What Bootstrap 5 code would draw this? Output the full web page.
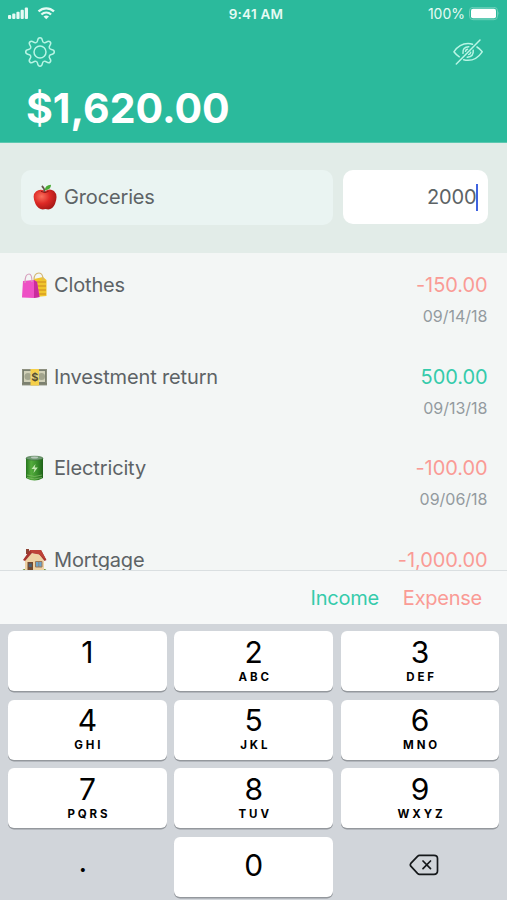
<!DOCTYPE html>
<html lang="en">
<head>
<meta charset="utf-8">
<meta name="viewport" content="width=device-width, initial-scale=1">
<title>Budget</title>
<link href="https://cdn.jsdelivr.net/npm/bootstrap@5.3.0/dist/css/bootstrap.min.css" rel="stylesheet">
<style>
body{font-family:Inter,"Liberation Sans",sans-serif;background:#f3f6f5;color:#5d6366;height:900px;overflow:hidden;font-size:20px;line-height:24px;letter-spacing:-.15px}
svg{display:block;flex:none}
.topbar{height:143px;background:#2bba9c;color:#fff;border-bottom:1px solid #5cc8b0}
.status{height:28px;padding:0 7px 0 8px;font-size:14px;line-height:28px;letter-spacing:0;color:#e6faf4}
.clock{font-size:13.5px;font-weight:600;letter-spacing:.25px;padding-left:5px}
.tools{height:48px;padding:0 24px}
.total{font-size:41px;line-height:50px;font-weight:700;letter-spacing:0;padding:7px 0 0 26px}
.entry{height:110px;background:#e2ece8;padding:27px 19px 28px 20.500px;gap:10px}
.category{flex:1;background:#eaf4f2;border-radius:10px;padding:0 11px;gap:6.500px}
.category span{margin-top:-2px}
.amount-box{width:145px;height:54px;background:#fff;border-radius:10px;padding-right:10px;color:#5d6366}
.caret{width:2.5px;height:27px;background:#3f63e0;margin-left:-1px}
.entries{height:317px;overflow:hidden;padding:20px 19.500px 0 21px}
.entry-row{height:91.6px}
.entry-row .name{gap:6px;height:25px}
.entry-row .name span{margin-top:-1px}
.value{line-height:25px;letter-spacing:-.08px}
.date{font-size:16px;line-height:22px;color:#939b9f;margin-top:7px;letter-spacing:0}
.neg{color:#fa9b95}.pos{color:#35cbab}
.actions{height:54px;background:#f6f8f8;border-top:1.5px solid #dadfe1;padding-right:25px;gap:24px;letter-spacing:-.25px}
.keypad{height:276px;background:#d1d5da;padding:7px 7.500px 0 8px}
.keys{display:grid;grid-template-columns:repeat(3,1fr);grid-auto-rows:60px;gap:8.5px 7.5px}
.key{border:0;padding:0 0 4px;background:#fff;border-radius:6px;box-shadow:0 1.5px 0 #94989d;color:#000;font-size:30px;line-height:34px;letter-spacing:0}
.key small{display:block;font-size:11.500px;line-height:14px;font-weight:700;letter-spacing:2.9px;padding-left:3px;height:14px;margin-top:1px}
.key.flat{background:none;box-shadow:none}
.key.point{padding:0 9px 11px 0}
.key.zero{padding:0 0 3px}
.key.erase{padding:0 0 3px 8px}
</style>
</head>
<body>
<header class="topbar">
  <div class="status d-flex align-items-center justify-content-between position-relative">
    <svg width="50" height="14" viewBox="0 0 50 14" fill="#e6faf4"><rect y="8" width="3.2" height="4" rx="1"/><rect x="4.2" y="6.5" width="3.2" height="5.5" rx="1"/><rect x="8.4" y="4.7" width="3.2" height="7.3" rx="1"/><rect x="12.6" y="2.8" width="3.2" height="9.2" rx="1"/><rect x="16.8" y=".5" width="3.2" height="11.5" rx="1"/>
      <g fill="none" stroke="#e6faf4" stroke-width="2.3"><path d="M30.5 4.4C35 .3 41.500.3 46 4.400"/><path d="M33.400 7.500C36.200 5 40.300 5 43.100 7.500"/></g><path d="M35.500 9.500Q38.250 7.500 41 9.500L38.250 12.300Z"/></svg>
    <div class="clock position-absolute top-0 start-50 translate-middle-x text-nowrap">9:41 AM</div>
    <div class="d-flex align-items-center gap-1"><span>100%</span>
      <svg width="31" height="15" viewBox="0 0 31 15"><rect x=".5" y=".3" width="28" height="12.400" rx="3.500" fill="none" stroke="#6dd0ba" stroke-width="1"/><rect x="2" y="1.800" width="25" height="9.400" rx="2" fill="#fff"/><path d="M29.600 4.300Q31 6.500 29.600 8.700Z" fill="#8edccb"/></svg>
    </div>
  </div>
  <div class="tools d-flex align-items-center justify-content-between">
    <svg width="32" height="32" viewBox="-16 -16 32 32" fill="none" stroke="#b9f5e5" stroke-width="1.500"><defs><path id="tooth" d="M-3.900-9.400Q-2.600-9.900-2.400-11.500C-2.100-13.600-1.300-14.300 0-14.300C1.300-14.300 2.100-13.600 2.400-11.500Q2.600-9.900 3.900-9.400"/></defs><use href="#tooth"/><use href="#tooth" transform="rotate(45)"/><use href="#tooth" transform="rotate(90)"/><use href="#tooth" transform="rotate(135)"/><use href="#tooth" transform="rotate(180)"/><use href="#tooth" transform="rotate(225)"/><use href="#tooth" transform="rotate(270)"/><use href="#tooth" transform="rotate(315)"/><circle r="6"/></svg>
    <svg width="30" height="28" viewBox="0 0 30 28" fill="none" stroke="#b9f5e5" stroke-width="1.500" stroke-linecap="round" stroke-linejoin="round"><path d="M3.300 26L27 2"/><path d="M6.300 18.800Q3 16.700.900 13.800Q6.500 5.500 15 5.500Q17.600 5.500 19.500 6.200"/><path d="M24 9Q27 10.900 29.200 13.800Q23.500 22.300 15 22.300Q12.600 22.300 10.700 21.700"/><path d="M10 15.300Q9.300 9 15.800 8.700M12.500 13.300Q12.800 11.600 14.500 11.300M20.200 12.300Q20.900 18.500 14.300 19.300M17.700 14.300Q17.500 16 15.700 16.600"/></svg>
  </div>
  <div class="total">$1,620.00</div>
</header>
<main>
  <section class="entry d-flex">
    <div class="category d-flex align-items-center">
      <svg width="26" height="27" viewBox="0 0 26 27"><defs><radialGradient id="red" cx=".35" cy=".35" r=".8"><stop offset="0" stop-color="#fa705d"/><stop offset=".45" stop-color="#dd2925"/><stop offset="1" stop-color="#961312"/></radialGradient></defs><path d="M13 7Q18 4 22 7Q26.500 11 23 20Q20 27 13.500 25Q7 27 3.500 20Q-.5 11 4 7.500Q8 4.500 13 7Z" fill="url(#red)"/><path d="M9 7.300Q13 10 16.500 7.300" stroke="#8c1615" fill="none"/><path d="M12.600 8Q12.500 4 9.800 2" stroke="#65544a" stroke-width="1.600" fill="none"/><path d="M12.800 6.300Q13 1 19 .8Q19 6 12.800 6.300Z" fill="#4aaa35"/></svg>
      <span>Groceries</span>
    </div>
    <div class="amount-box d-flex align-items-center justify-content-end"><span>2000</span><span class="caret"></span></div>
  </section>
  <section class="entries">
    <div class="entry-row d-flex justify-content-between">
      <div class="name d-flex align-items-center">
        <svg width="27" height="27" viewBox="0 0 27 27"><path d="M13 7L22 5L25.500 8V24L14 25Z" fill="#f0c52c"/><path d="M14 10H25M14 14H25M14 18H25M14 22H25" stroke="#d89d22" stroke-width="1.500"/><path d="M13 8Q13 1 18 1Q22 1 22 8" fill="none" stroke="#d4b774" stroke-width="1.200"/><path d="M2 9L13 8L16 10L18.500 25L13 26L1 25.500Z" fill="#ee50c5"/><path d="M13 8L16 10L18.500 25L13 26Z" fill="#c92c9d"/><path d="M4 11Q4 2 8 2Q11 2 11 10" fill="none" stroke="#d7a0bd" stroke-width="1.200"/></svg><span>Clothes</span>
      </div>
      <div class="text-end"><div class="value neg">-150.00</div><div class="date">09/14/18</div></div>
    </div>
    <div class="entry-row d-flex justify-content-between">
      <div class="name d-flex align-items-center">
        <svg width="27" height="27" viewBox="0 0 27 27"><rect x="1" y="5" width="25" height="16" fill="#8e9180"/><rect x="2.500" y="6.500" width="22" height="12" fill="#d0d0b8" stroke="#6f7567" stroke-width=".8"/><circle cx="7" cy="12.500" r="3.500" fill="#a2a58e"/><circle cx="20.500" cy="12.500" r="3.500" fill="#a2a58e"/><path d="M1 19.500H26M1 21H26" stroke="#747866" stroke-width=".7"/><path d="M9.500 5H18V21.500H9.500Z" fill="#f5cf49"/><circle cx="13.700" cy="12.500" r="4" fill="#e9d783"/><text x="13.700" y="16.500" font-size="11" font-weight="700" text-anchor="middle" fill="#574d2d">$</text></svg><span>Investment return</span>
      </div>
      <div class="text-end"><div class="value pos">500.00</div><div class="date">09/13/18</div></div>
    </div>
    <div class="entry-row d-flex justify-content-between">
      <div class="name d-flex align-items-center">
        <svg width="27" height="27" viewBox="0 0 27 27"><defs><linearGradient id="cell"><stop stop-color="#26751e"/><stop offset=".3" stop-color="#55ad3d"/><stop offset=".65" stop-color="#398f2b"/><stop offset="1" stop-color="#1e6118"/></linearGradient></defs><path d="M5 3V23Q13.500 28 22 23V3Z" fill="url(#cell)"/><ellipse cx="13.500" cy="3.200" rx="8.500" ry="2" fill="#739c77" stroke="#376b35" stroke-width=".6"/><ellipse cx="13.500" cy="2.600" rx="3.500" ry="1" fill="#b7c8ba"/><path d="M14.500 9L10.500 14H13.500L12.500 18L16.800 12.500H13.700Z" fill="#c6e8b4"/><path d="M6 20Q13.500 23 21 20M6 22.500Q13.500 25.500 21 22.500" fill="none" stroke="#87bc6b" stroke-width=".7"/></svg><span>Electricity</span>
      </div>
      <div class="text-end"><div class="value neg">-100.00</div><div class="date">09/06/18</div></div>
    </div>
    <div class="entry-row d-flex justify-content-between">
      <div class="name d-flex align-items-center">
        <svg width="27" height="27" viewBox="0 0 27 27"><path d="M1 24Q3 20 6 24ZM20 24Q24 20 26 24Z" fill="#69963c"/><path d="M4 13L11 6L20 8L23 14V25H4Z" fill="#eed2a4"/><path d="M5 2H8V7H5Z" fill="#8e4435"/><path d="M2 13L9 3H20L25.500 13L23.500 14L18 7L11 6L4 14Z" fill="#a7352f"/><path d="M9 3H20L25 12.500L18 7.500L11 6Z" fill="#bd4238"/><path d="M6.500 15H12V25H6.500Z" fill="#74492e"/><path d="M7.700 16.500H10.800V20H7.700Z" fill="#4c6378"/><path d="M14.500 14.500H21V20H14.500Z" fill="#6ba4cc" stroke="#9b7758"/><path d="M17.800 14.500V20" stroke="#9b7758" stroke-width=".7"/></svg><span>Mortgage</span>
      </div>
      <div class="text-end"><div class="value neg">-1,000.00</div></div>
    </div>
  </section>
</main>
<div class="actions d-flex align-items-center justify-content-end"><span class="pos">Income</span><span class="neg">Expense</span></div>
<footer class="keypad">
  <div class="keys">
    <button class="key">1<small></small></button><button class="key">2<small>ABC</small></button><button class="key">3<small>DEF</small></button>
    <button class="key">4<small>GHI</small></button><button class="key">5<small>JKL</small></button><button class="key">6<small>MNO</small></button>
    <button class="key">7<small>PQRS</small></button><button class="key">8<small>TUV</small></button><button class="key">9<small>WXYZ</small></button>
    <button class="key flat point">.</button><button class="key zero">0</button>
    <button class="key flat erase d-flex align-items-center justify-content-center" aria-label="Delete"><svg width="30" height="22" viewBox="0 0 30 22" fill="none" stroke="#15181a" stroke-width="1.700" stroke-linecap="round" stroke-linejoin="round"><path d="M10.500 1.300H25Q28.500 1.300 28.500 4.500V17Q28.500 20.300 25 20.300H10.500Q9.500 20.300 8.500 19.300L1.800 12.200Q.800 10.800 1.800 9.400L8.500 2.300Q9.500 1.300 10.500 1.300ZM14 7L21.500 14.600M21.500 7L14 14.600"/></svg></button>
  </div>
</footer>
<script src="https://cdn.jsdelivr.net/npm/bootstrap@5.3.0/dist/js/bootstrap.bundle.min.js"></script>
</body>
</html>
